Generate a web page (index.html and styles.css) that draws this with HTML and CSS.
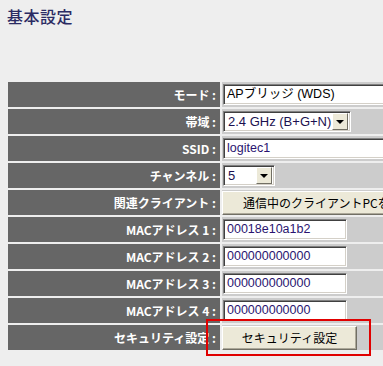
FILE: index.html
```html
<!DOCTYPE html>
<html lang="ja">
<head>
<meta charset="utf-8">
<title>基本設定</title>
<link rel="stylesheet" href="styles.css">
</head>
<body>
<h1 class="title">基本設定</h1>
<div class="form">
  <div class="label">モード :</div>
  <div class="value"><span class="field field-full">APブリッジ (WDS)</span></div>

  <div class="label">帯域 :</div>
  <div class="value"><div class="select select-band"><span class="sel-text">2.4 GHz (B+G+N)</span><span class="sel-btn"></span></div></div>

  <div class="label">SSID :</div>
  <div class="value"><span class="field field-full field-data">logitec1</span></div>

  <div class="label">チャンネル :</div>
  <div class="value"><div class="select select-ch"><span class="sel-text">5</span><span class="sel-btn"></span></div></div>

  <div class="label">関連クライアント :</div>
  <div class="value"><button class="btn btn-clients" type="button">通信中のクライアントPCを表示</button></div>

  <div class="label">MACアドレス 1 :</div>
  <div class="value"><span class="field field-mac field-data">00018e10a1b2</span></div>

  <div class="label">MACアドレス 2 :</div>
  <div class="value"><span class="field field-mac field-data">000000000000</span></div>

  <div class="label">MACアドレス 3 :</div>
  <div class="value"><span class="field field-mac field-data">000000000000</span></div>

  <div class="label">MACアドレス 4 :</div>
  <div class="value"><span class="field field-mac field-data">000000000000</span></div>

  <div class="label">セキュリティ設定 :</div>
  <div class="value"><button class="btn btn-security" type="button">セキュリティ設定</button></div>

  <div class="highlight"></div>
</div>
</body>
</html>
```
FILE: styles.css
```css
html, body {
  margin: 0;
  padding: 0;
  overflow: hidden;
  background: #eeeeee;
}

body {
  width: 383px;
  height: 366px;
  font-family: "Liberation Sans", "Noto Sans CJK JP", sans-serif;
}

.title {
  margin: 0;
  padding: 5px 0 0 7px;
  font-family: "Noto Sans CJK JP", sans-serif;
  font-size: 16px;
  line-height: 22px;
  font-weight: 500;
  letter-spacing: 0.5px;
  color: #2b2b63;
}

.form {
  position: relative;
  display: grid;
  grid-template-columns: 212px 220px;
  grid-auto-rows: 25px;
  gap: 2px;
  margin: 55px 0 0 8px;
  width: 434px;
}

.label {
  background: #666666;
  color: #ffffff;
  font-family: "Noto Sans CJK JP", sans-serif;
  font-weight: bold;
  font-size: 12px;
  line-height: 25px;
  text-align: right;
  padding-right: 4px;
  white-space: nowrap;
}

.value {
  background: #cccccc;
  display: flex;
  align-items: center;
  padding-left: 1px;
  overflow: hidden;
}

.field {
  display: block;
  box-sizing: border-box;
  height: 21px;
  border: 1px solid;
  border-color: #808080 #ffffff #ffffff #808080;
  box-shadow: inset 1px 1px #404040, inset -1px -1px #d4d0c8;
  background: #ffffff;
  padding: 0 3px;
  font-family: "Liberation Sans", "Noto Sans CJK JP", sans-serif;
  font-size: 12.5px;
  line-height: 19px;
  color: #000000;
  white-space: nowrap;
}

.field-full {
  width: 200px;
  flex: none;
}

.field-mac {
  width: 124px;
  font-size: 12.5px;
}

.field-data {
  color: #2a1470;
}

.select {
  display: flex;
  box-sizing: border-box;
  height: 21px;
  border: 1px solid;
  border-color: #808080 #ffffff #ffffff #808080;
  box-shadow: inset 1px 1px #404040, inset -1px -1px #d4d0c8;
  background: #ffffff;
  padding: 2px;
}

.select-band {
  width: 128px;
}

.select-ch {
  width: 52px;
}

.sel-text {
  flex: 1;
  padding-left: 2px;
  font-size: 13px;
  line-height: 15px;
  color: #1a1050;
  white-space: nowrap;
}

.sel-btn {
  box-sizing: border-box;
  width: 16px;
  height: 17px;
  margin-top: -1px;
  background: #ece9d8;
  border: 1px solid;
  border-color: #ffffff #716f64 #716f64 #ffffff;
  display: flex;
  align-items: center;
  justify-content: center;
}

.sel-btn::after {
  content: "";
  border-left: 4px solid transparent;
  border-right: 4px solid transparent;
  border-top: 4px solid #000000;
}

.btn {
  box-sizing: border-box;
  height: 24px;
  margin: 0 0 0 -1px;
  background: #ece9d8;
  border: 1px solid;
  border-color: #ffffff #716f64 #716f64 #ffffff;
  box-shadow: inset -1px -1px #aca899;
  font-family: "Noto Sans CJK JP", sans-serif;
  font-size: 12px;
  color: #000000;
  padding: 0;
  white-space: nowrap;
  flex: none;
}

.btn-clients {
  padding: 0 20px;
}

.btn-security {
  width: 135px;
}

.highlight {
  position: absolute;
  left: 198px;
  top: 237px;
  width: 165px;
  height: 37px;
  box-sizing: border-box;
  border: 2px solid #e00000;
  pointer-events: none;
}
```
